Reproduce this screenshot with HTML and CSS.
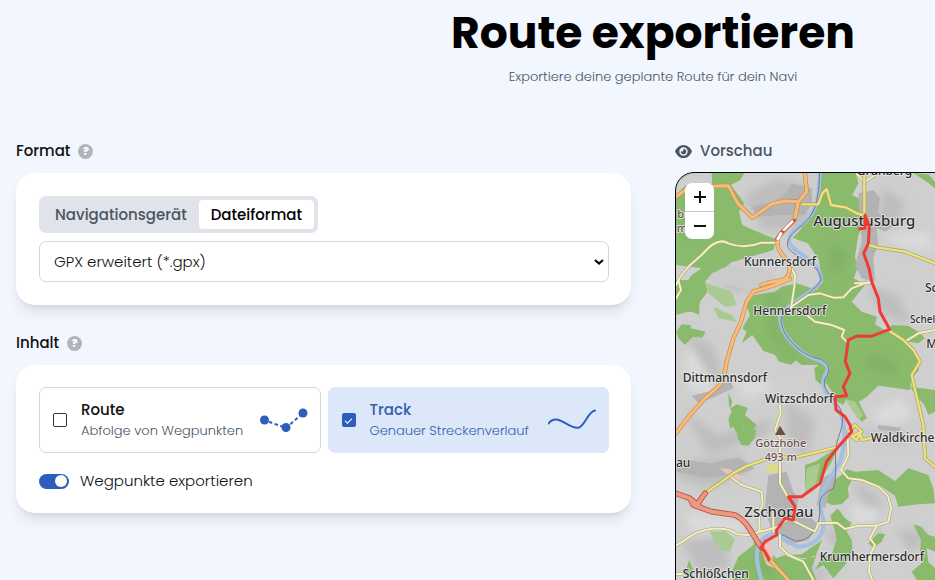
FILE: index.html
```html
<!DOCTYPE html>
<html lang="de">
<head>
<meta charset="utf-8">
<meta name="viewport" content="width=device-width, initial-scale=1">
<title>Route exportieren</title>
<link rel="stylesheet" href="styles.css">
</head>
<body>
<div class="page">
  <header class="header">
    <h1>Route exportieren</h1>
    <p>Exportiere deine geplante Route für dein Navi</p>
  </header>
  <main class="columns">
    <form class="settings">
      <section>
        <h2 class="heading">Format <button type="button" class="help">?</button></h2>
        <div class="card format">
          <div class="tabs">
            <button type="button" class="tab">Navigationsgerät</button>
            <button type="button" class="tab active">Dateiformat</button>
          </div>
          <div class="select-box">
            <select aria-label="Dateiformat"><option>GPX erweitert (*.gpx)</option></select>
            <svg class="chevron" viewBox="0 0 12 8" aria-hidden="true"><path d="M2 2l4 3.600 4-3.600"/></svg>
          </div>
        </div>
      </section>
      <section>
        <h2 class="heading">Inhalt <button type="button" class="help">?</button></h2>
        <div class="card content">
          <div class="options">
            <label class="option">
              <input type="checkbox">
              <span class="option-text"><strong>Route</strong><small>Abfolge von Wegpunkten</small></span>
              <svg class="sketch" viewBox="0 0 48 26" aria-hidden="true">
                <path class="dashed" d="M4 13L26 21L43 6"/>
                <circle cx="4.500" cy="13" r="4.500"/><circle cx="26" cy="20.500" r="4.500"/><circle cx="43" cy="6" r="4.500"/>
              </svg>
            </label>
            <label class="option selected">
              <input type="checkbox" checked>
              <span class="option-text"><strong>Track</strong><small>Genauer Streckenverlauf</small></span>
              <svg class="sketch" viewBox="0 0 48 26" aria-hidden="true">
                <path class="line" d="M0.500 16.500C3 12.500 8 11.500 12 13.500C18 15.500 24 22 31 20.500C37 18.500 40 4.500 47 3.500"/>
              </svg>
            </label>
          </div>
          <label class="switch-row"><input class="switch" type="checkbox" role="switch" checked>Wegpunkte exportieren</label>
        </div>
      </section>
    </form>
    <section class="preview">
      <h2 class="heading muted">
        <svg class="eye" viewBox="0 0 576 512" aria-hidden="true"><path d="M288 32c-80.800 0-145.500 36.800-192.600 80.600C48.600 156 17.300 208 2.500 243.700c-3.300 7.900-3.300 16.700 0 24.600C17.300 304 48.600 356 95.400 399.400C142.500 443.200 207.200 480 288 480s145.500-36.800 192.600-80.600c46.800-43.500 78.100-95.400 93-131.100c3.300-7.900 3.300-16.700 0-24.600c-14.900-35.700-46.200-87.700-93-131.100C433.500 68.800 368.800 32 288 32zM144 256a144 144 0 1 1 288 0 144 144 0 1 1 -288 0zm144-64c0 35.300-28.700 64-64 64c-7.100 0-13.900-1.200-20.300-3.300c-5.500-1.800-11.900 1.600-11.700 7.400c.3 6.900 1.300 13.800 3.200 20.700c13.700 51.200 66.400 81.600 117.600 67.900s81.600-66.400 67.900-117.600c-11.100-41.500-47.800-69.400-88.600-71.100c-5.800-.2-9.200 6.100-7.400 11.700c2.100 6.400 3.300 13.200 3.300 20.300z"/></svg>
        Vorschau
      </h2>
      <div class="map">
        <svg class="tiles" viewBox="33 114 1842 1800" preserveAspectRatio="xMinYMin slice" role="img" aria-label="Karte der Route von Augustusburg nach Zschopau">
          <defs>
            <filter id="soft" x="-30%" y="-30%" width="160%" height="160%"><feGaussianBlur stdDeviation="13"/></filter>
            <g id="minor">
              <path d="M33 450C50 410 80 385 110 360C145 318 170 312 190 325C230 340 260 335 290 323L338 323"/>
              <path d="M374 390L390 420L388 455L378 520"/>
              <path d="M33 490L48 465L40 435"/>
              <path d="M378 516L430 480L465 475L505 488L535 487L560 460L605 443L620 440"/>
              <path d="M425 540L450 560L500 570L538 585L530 605L545 620"/>
              <path d="M575 118L600 140L640 114M570 445H612"/>
              <path d="M720 620L760 595L810 585"/>
              <path d="M345 810L347 835L330 885L345 910L345 1045L368 1085M190 1020L230 1050L290 1070L293 1108L282 1130L284 1188"/>
              <path d="M33 1232L90 1195C140 1175 190 1175 215 1198L250 1200L340 1175L370 1150L450 1190L460 1165L515 1163L540 1182L580 1172H635L670 1160L678 1120L670 1085L640 1055L590 1035L550 1030L528 1005L550 960L548 910"/>
              <path d="M635 1172L615 1210L630 1230L615 1260L612 1310L622 1335M345 1200L345 1235L370 1260L415 1280L445 1335M33 1317H52M325 1120L325 1190"/>
            </g>
            <g id="second">
              <path d="M412 208L460 208L472 175L485 162L498 210L545 218L575 235L598 240L598 114"/>
              <path d="M610 330L640 338L720 350L810 385"/>
              <path d="M674 588L715 615L745 645L765 680L740 720L755 785L775 870L780 970L810 995"/>
              <path d="M120 1075L205 1015L240 995L310 970L400 965L510 938M550 890L570 870L590 890L560 905L575 915L585 895L590 915L640 905M310 1275L330 1290L370 1335"/>
            </g>
            <g id="primary">
              <path d="M33 185L75 155L190 152L218 205L262 248L320 207L360 198L400 200L425 170L420 114M400 200L390 250L337 310L338 330C340 360 376 370 374 408C365 450 330 430 290 450"/>
              <path d="M375 432L330 450L265 470L245 500L228 560L205 610L185 680L178 720L165 750L120 790L75 840L48 875L33 895"/>
              <path d="M288 1240L320 1280L370 1335"/>
            </g>
            <path id="trunk" d="M33 1075L75 1090L85 1110L140 1130L210 1140C250 1160 255 1190 290 1238M120 1075L95 1110M80 1095L105 1115"/>
          </defs>
          <!-- hill shading -->
          <g class="shade" filter="url(#soft)">
            <path d="M230 190L330 130L430 150L430 270L300 290Z M650 150L720 200L700 280L640 260Z M130 400L260 410L330 450L200 470Z M60 580L150 640L180 760L110 700Z M600 450L700 480L740 570L650 540Z M470 560L530 600L500 640Z M50 820L160 900L320 850L310 900L130 960Z M33 980L230 960L260 1010L130 1060L33 1030Z M360 800L450 850L430 960L370 940Z M560 880L750 900L700 930Z M560 1030L650 1090L640 1210L590 1100Z M690 1180L790 1190L740 1260Z M50 1220L170 1200L200 1300L100 1310Z M460 1180L560 1200L540 1260Z M400 1290L500 1310L460 1340Z"/>
          </g>
          <g class="light" filter="url(#soft)">
            <path d="M660 300L790 290L800 350L700 330Z M400 620L510 590L500 620Z M60 650L90 660L160 790L70 760Z M210 730L310 740L330 760L240 790Z M620 830L710 790L740 850L650 870Z M560 1110L640 1120L650 1170L560 1160Z M60 1130L250 1160L230 1190L80 1190Z"/>
          </g>
          <!-- woods -->
          <g class="wood">
            <path d="M33 142L78 114H50L33 118Z M140 114H238L226 135L198 150L238 205L222 230L232 270L300 300L332 312L326 345L200 382L182 396L142 414L120 440L128 470L105 500L98 530L33 530V470L60 450L80 420L110 400L33 390V180L62 150L142 155Z"/>
            <path d="M462 114H572L580 145L562 180L590 195L594 230L606 248L580 300L570 365L578 400L566 430L600 450L580 475L560 500L590 530L636 545L630 568L668 590L680 570L730 572L760 590L780 610L760 625L728 620L760 680L762 705L740 730L735 765L640 752L605 785L582 800L590 820L606 850L590 860L560 820L544 793L535 810L515 800L500 768L480 740L470 750L452 735L448 700L462 690L410 690L392 676L378 690L342 680L330 660L295 648L262 600L230 625L245 590L232 580L255 540L244 510L268 480L330 470L350 455L395 445L455 465L470 440L462 375L442 345L428 325L382 308L400 292L432 252L457 205Z"/>
            <path d="M745 114L790 118L810 140V160L785 140Z M33 435H122L118 470L103 490V540L75 528L33 540Z M50 568L76 570L78 580L122 590L112 608L84 605L60 630L40 610L33 590Z M190 774L202 800L195 820L215 808L248 818L240 840L275 870L262 890L235 882L218 900L205 875L195 880L190 850L200 830L192 812Z M735 755L810 765V830L790 840L778 810L760 790Z"/>
            <path d="M218 885L275 885L268 910L250 932L230 930L218 910Z M420 990L450 980L520 935L500 980L470 1030L440 1060L420 1055Z M545 1003L570 1010L640 1005L690 1038L730 1000L790 1020L805 1060L810 1105L760 1108L700 1115L690 1082L650 1055L615 1040L560 1035L548 1060L552 1085L530 1108L500 1110L480 1100L486 1080L500 1040L530 1020Z"/>
            <path d="M496 1142L518 1120L540 1150L560 1164L545 1190L560 1215L562 1248L540 1290L505 1330L490 1310L475 1290L450 1305L470 1270L500 1258L515 1212L510 1190Z M745 1168L768 1175L790 1200L810 1205V1250L785 1240L790 1280L810 1300V1335H755L740 1310L775 1280L765 1250L768 1215Z M640 1194L660 1198L650 1220L625 1240L610 1225Z"/>
            <path d="M270 1190L265 1230L220 1265L200 1310L205 1335H455L440 1300L455 1260L400 1278L360 1260L335 1270L300 1240L280 1250Z M72 1275L85 1305L60 1320Z M375 1260L410 1258L472 1215L450 1265L410 1270Z"/>
          </g>
          <g class="clearing">
            <path d="M122 443L200 470L215 510L180 515L130 475Z M145 515L200 540L215 560L160 550Z M425 1000L465 985L450 1060L420 1070Z M540 792L570 800L595 840L580 855Z M133 1190L180 1188L210 1212L195 1250L165 1245Z"/>
          </g>
          <!-- relief inside the woods -->
          <g class="relief" filter="url(#soft)">
            <path d="M310 480L350 470L330 540L350 620L420 680L380 680L310 600Z M60 200L120 190L110 290L60 320Z M490 330L550 350L520 420L490 400Z M610 650L700 690L690 720L600 700Z M455 700L485 720L470 760L500 790L480 790Z M285 1250L330 1290L320 1330L280 1320Z"/>
          </g>
          <path class="hay" d="M128 432L170 400L290 395L330 425L330 440L280 455L240 465L200 450L165 450Z"/>
          <!-- built-up areas -->
          <g class="town">
            <path d="M260 215L300 205L320 207L370 165L380 145L440 160L442 202L420 240L350 240L280 245Z M580 175L625 165L645 190L640 235L690 270L660 290L635 280L640 325L625 370L630 440L590 430L570 390L590 320Z M80 782L130 770L165 745L200 742L205 760L140 790L100 805Z M310 1020L365 1010L385 1070L400 1090L395 1120L430 1140L460 1170L430 1215L370 1230L320 1190L300 1120Z M470 1030L510 1010L508 1050L490 1080L480 1120L455 1110Z M35 972L140 985L220 968L270 1000L220 1020L120 1028L35 1010Z M638 870L710 878L700 890L640 884Z"/>
          </g>
          <path class="urban" d="M165 1000L195 1003L232 1025L212 1040Z M285 1210L305 1195L318 1235L330 1300L305 1290L290 1250Z"/>
          <path class="park" d="M310 987L340 990L335 1015L305 1010Z"/>
          <!-- rivers and railway -->
          <path class="river" d="M464 114C462 160 460 210 435 245C410 280 370 285 372 320C385 360 470 370 468 440C440 480 370 500 345 545C345 600 400 650 445 670C480 680 500 695 480 720C460 760 500 790 525 830C540 865 545 920 525 980C490 1040 465 1070 465 1120C490 1180 470 1230 400 1235C370 1230 350 1190 325 1195C270 1210 265 1260 290 1335"/>
          <path class="rail" d="M464 114C462 160 460 210 435 245C410 280 360 300 368 335C385 370 465 380 468 435C440 485 370 500 348 550C348 605 405 655 450 668C485 675 505 700 480 730C470 765 500 780 525 820C545 860 520 900 515 925C505 970 520 1010 505 1060C480 1075 465 1080 464 1110C470 1170 440 1220 390 1218L350 1198"/>
          <!-- roads: casing below, fill above -->
          <use class="case-minor" href="#minor"/>
          <use class="fill-minor" href="#minor"/>
          <use class="case-second" href="#second"/>
          <use class="fill-second" href="#second"/>
          <use class="case-main" href="#primary"/>
          <use class="fill-main" href="#primary"/>
          <path class="works-case" d="M388 256L350 292L336 312"/>
          <path class="works" d="M382 260L350 292L338 312"/>
          <use class="case-trunk" href="#trunk"/>
          <use class="fill-trunk" href="#trunk"/>
          <path class="summit" d="M330 900L345 872L362 900Z"/>
          <g class="place big">
            <text x="445" y="274">Augustusburg</text>
            <text x="238" y="1147">Zschopau</text>
          </g>
          <g class="place">
            <text x="575" y="119">Grünberg</text>
            <text x="237" y="392">Kunnersdorf</text>
            <text x="265" y="539">Hennersdorf</text>
            <text x="53" y="740">Dittmannsdorf</text>
            <text x="300" y="803">Witzschdorf</text>
            <text x="617" y="920">Waldkirchen</text>
            <text x="464" y="1277">Krumhermersdorf</text>
            <text x="53" y="1328">Schlößchen</text>
            <text x="780" y="470">Schönerstadt</text>
            <text x="784" y="639">Metzdorf</text>
            <text x="33" y="997">au</text>
          </g>
          <g class="place hamlet"><text x="735" y="565">Schellenberg</text></g>
          <g class="place peak"><text x="271" y="937">Götzhöhe</text><text x="299" y="978">493 m</text><text x="37" y="250">ber</text><text x="35" y="290">mus</text></g>
          <!-- exported track -->
          <path class="track" d="M584 281L600 280L600 240L613 275L610 325L596 355L612 400L620 440L640 490L645 530L674 583L618 604L575 603L550 615L541 680L555 715L535 755L545 782L510 785L513 825L540 845L555 870L560 890L520 935L485 980L465 1045L410 1085H370L390 1115L385 1155L360 1150L335 1185L335 1200L300 1220L288 1238L300 1250L312 1274"/>
        </svg>
        <div class="zoom">
          <button type="button" aria-label="Vergrößern"><svg viewBox="0 0 14 14"><path d="M1 7H13M7 1V13"/></svg></button>
          <button type="button" aria-label="Verkleinern"><svg viewBox="0 0 14 14"><path d="M1 7H13"/></svg></button>
        </div>
      </div>
    </section>
  </main>
</div>
</body>
</html>
```
FILE: styles.css
```css
* { box-sizing: border-box; }
html { overflow: hidden; }
body {
  margin: 0;
  background: #f1f6ff;
  color: #111;
  font: 300 15px/24px Poppins, Inter, sans-serif;
}
button, select, input { font: inherit; color: inherit; margin: 0; }
.page { min-width: 1306px; padding: 5px 16px 32px; }
.header { text-align: center; margin-bottom: 52px; }
h1 { margin: 0 0 6px; font-size: 44px; line-height: 56px; font-weight: 700; color: #000; }
.header p { margin: 0; font-size: 13px; line-height: 20px; color: #4b5563; }
.columns { display: grid; grid-template-columns: 1fr 1fr; gap: 44px; }
.settings { display: flex; flex-direction: column; gap: 26px; }
.heading {
  display: flex;
  align-items: center;
  gap: 8px;
  margin: 0 0 10px;
  font-size: 15px;
  line-height: 24px;
  font-weight: 500;
}
.muted { color: #4b5563; margin-bottom: 9px; }
.eye { width: 17px; height: 15px; fill: currentColor; }
.help {
  width: 15px;
  height: 15px;
  padding: 0;
  border: 0;
  border-radius: 50%;
  background: #b1b4ba;
  color: #fff;
  font-size: 11px;
  line-height: 15px;
  font-weight: 800;
}
.card {
  display: flex;
  flex-direction: column;
  border-radius: 19px;
  background: #fff;
  box-shadow: 0 9px 14px -3px rgb(0 0 0 / 10%), 0 4px 6px -4px rgb(0 0 0 / 10%);
}
.format { padding: 23px 22px 23px 23px; gap: 8px; }
.content { padding: 22px 22px 20px 23px; gap: 16px; }
.tabs {
  display: flex;
  align-self: flex-start;
  padding: 4px;
  border-radius: 7px;
  background: #e0e3ea;
}
.tab {
  height: 29px;
  padding: 0 12px;
  border: 0;
  border-radius: 4px;
  background: none;
  color: #4b5563;
  font-weight: 500;
}
.active { background: #fff; color: #000; }
.select-box { display: grid; align-items: center; }
.select-box > * { grid-area: 1 / 1; }
select {
  appearance: none;
  width: 100%;
  height: 41px;
  padding: 0 14px;
  border: 1px solid #d1d5db;
  border-radius: 7px;
  background: #fff;
}
.chevron {
  justify-self: end;
  width: 12px;
  height: 8px;
  margin-right: 4px;
  fill: none;
  stroke: #000;
  stroke-width: 2;
  pointer-events: none;
}
.options { display: grid; grid-template-columns: 1fr 1fr; gap: 7px; }
.option {
  display: flex;
  align-items: center;
  gap: 14px;
  height: 66px;
  padding: 0 12px 0 13px;
  border: 1px solid #d1d5db;
  border-radius: 7px;
}
.option input {
  appearance: none;
  flex: none;
  width: 14px;
  height: 14px;
  border: 1px solid #333;
  border-radius: 2px;
  background: #fff;
}
.option input:checked {
  border-color: #2c5fbc;
  background: #2c5fbc;
  display: grid;
  place-items: center;
}
.option input:checked::before {
  content: "";
  width: 6px;
  height: 3px;
  border: solid #fff;
  border-width: 0 0 1px 1px;
  rotate: -45deg;
}
.option-text { flex: 1; display: flex; flex-direction: column; white-space: nowrap; }
.option strong { font-weight: 500; line-height: 21px; }
.option small { font-size: 13px; line-height: 21px; color: #4b5563; }
.selected { border-color: #dce7f9; background: #dce7f9; }
.selected, .selected small { color: #335fae; }
.sketch { flex: none; width: 48px; height: 26px; fill: #2c5fbc; }
.line, .dashed { fill: none; stroke: #2c5fbc; stroke-width: 2; stroke-linecap: round; }
.dashed { stroke-dasharray: 2 4; }
.switch-row { display: flex; align-items: center; align-self: flex-start; gap: 11px; height: 24px; }
.switch {
  appearance: none;
  display: flex;
  justify-content: flex-end;
  align-items: center;
  width: 30px;
  height: 15px;
  padding: 1px 2px;
  border-radius: 8px;
  background: #2c5fbc;
}
.switch::before { content: ""; width: 12px; height: 12px; border-radius: 50%; background: #fff; }
.map {
  position: relative;
  height: 602px;
  overflow: hidden;
  border: 1px solid #000;
  border-radius: 19px;
  background: #d0cfcf;
}
.tiles { display: block; width: 100%; height: 100%; stroke-linejoin: round; stroke-linecap: round; }
.shade { fill: #bebebe; }
.light { fill: #dcdbdb; }
.wood { fill: #8abb6d; }
.clearing { fill: #a9cb93; }
.relief { fill: #5f8f48; opacity: 0.2; }
.hay { fill: #cccbcb; }
.town { fill: #b4b3b3; }
.urban { fill: #efc3bd; }
.park { fill: #dddd86; }
.river, .rail, .works, .works-case, .track, .tiles use { fill: none; }
.river { stroke: #a3bfe3; stroke-width: 12; }
.rail { stroke: #747b84; stroke-width: 3; }
.case-minor { stroke: #a3a27c; stroke-width: 9; }
.case-second { stroke: #aaa263; stroke-width: 11; }
.case-main { stroke: #c58c50; stroke-width: 13; }
.case-trunk { stroke: #a95244; stroke-width: 17; }
.fill-minor { stroke: #f4f1bd; stroke-width: 6; }
.fill-second { stroke: #eee27e; stroke-width: 7; }
.fill-main { stroke: #f7bd78; stroke-width: 9; }
.fill-trunk { stroke: #f19680; stroke-width: 12; }
.works-case { stroke: #c9544b; stroke-width: 11; }
.works { stroke: #fff; stroke-width: 8; stroke-dasharray: 35 14; }
.track { stroke: #ee3b34; stroke-width: 9; }
.summit { fill: #6b5048; }
.place {
  font: 500 36px "Noto Sans", sans-serif;
  fill: #2b2b2b;
  stroke: #e8e8e8;
  stroke-width: 5;
  paint-order: stroke;
}
.big { font-size: 45px; }
.hamlet { font-size: 30px; }
.peak { font-size: 33px; fill: #6b5048; }
.zoom {
  position: absolute;
  top: 10px;
  left: 9px;
  display: grid;
  width: 29px;
  border-radius: 7px;
  overflow: hidden;
  background: #fff;
}
.zoom button { display: grid; place-items: center; height: 28px; padding: 0; border: 0; background: none; }
.zoom button + button { border-top: 1px solid #ccc; }
.zoom svg { width: 14px; height: 14px; stroke: #111; stroke-width: 2; }
```
